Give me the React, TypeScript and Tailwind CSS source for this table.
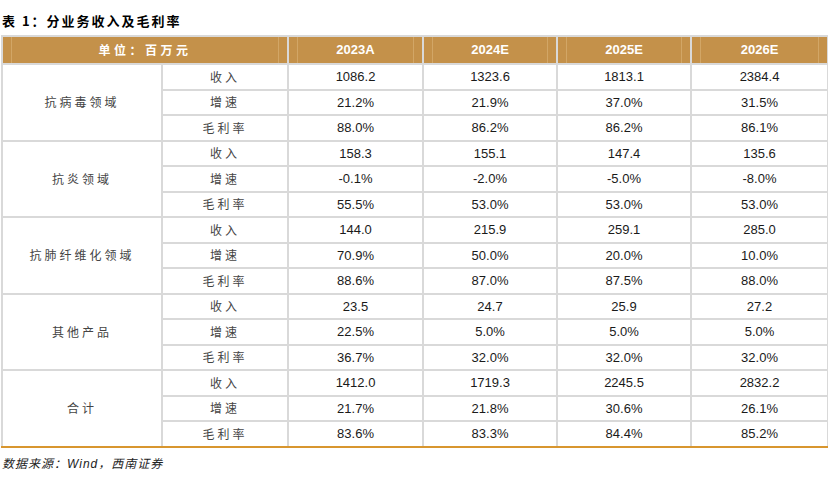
const years = ['2023A', '2024E', '2025E', '2026E'];

const groups = [
  {
    name: '抗病毒领域',
    rows: [
      ['1086.2', '1323.6', '1813.1', '2384.4'],
      ['21.2%', '21.9%', '37.0%', '31.5%'],
      ['88.0%', '86.2%', '86.2%', '86.1%'],
    ],
  },
  {
    name: '抗炎领域',
    rows: [
      ['158.3', '155.1', '147.4', '135.6'],
      ['-0.1%', '-2.0%', '-5.0%', '-8.0%'],
      ['55.5%', '53.0%', '53.0%', '53.0%'],
    ],
  },
  {
    name: '抗肺纤维化领域',
    rows: [
      ['144.0', '215.9', '259.1', '285.0'],
      ['70.9%', '50.0%', '20.0%', '10.0%'],
      ['88.6%', '87.0%', '87.5%', '88.0%'],
    ],
  },
  {
    name: '其他产品',
    rows: [
      ['23.5', '24.7', '25.9', '27.2'],
      ['22.5%', '5.0%', '5.0%', '5.0%'],
      ['36.7%', '32.0%', '32.0%', '32.0%'],
    ],
  },
  {
    name: '合计',
    rows: [
      ['1412.0', '1719.3', '2245.5', '2832.2'],
      ['21.7%', '21.8%', '30.6%', '26.1%'],
      ['83.6%', '83.3%', '84.4%', '85.2%'],
    ],
  },
];

const metrics = ['收入', '增速', '毛利率'];

const cjk = "font-['Noto_Sans_CJK_SC',sans-serif]";
const num = "font-['Liberation_Sans','Noto_Sans_CJK_SC',sans-serif]";

export default function App() {
  return (
    <div className="w-[828px] h-[481px] bg-white text-[#222]">
      <div className={`pt-[12px] pl-[2px] h-[35px] text-[13px] leading-[18px] font-bold tracking-[2px] text-black ${cjk}`}>
        表 1：分业务收入及毛利率
      </div>
      <table className="ml-[1px] w-[826px] table-fixed border-collapse">
        <colgroup>
          <col className="w-[160px]" />
          <col className="w-[126px]" />
          <col className="w-[135px]" />
          <col className="w-[134px]" />
          <col className="w-[134px]" />
          <col className="w-[137px]" />
        </colgroup>
        <thead>
          <tr className="h-[28px]">
            <th colSpan={2} className="border-2 border-[#d9d9d9] bg-[#c4914a] p-0">
              <div className={`mx-[8px] h-[26px] flex items-center justify-center border-x border-[#d2a666] text-[12px] font-bold tracking-[3.5px] text-white ${cjk}`}>
                单位：百万元
              </div>
            </th>
            {years.map((y) => (
              <th key={y} className="border-2 border-[#d9d9d9] bg-[#c4914a] p-0">
                <div className={`mx-[8px] h-[26px] flex items-center justify-center border-x border-[#d2a666] text-[13px] font-bold text-white ${num}`}>
                  {y}
                </div>
              </th>
            ))}
          </tr>
        </thead>
        <tbody>
          {groups.map((g, gi) =>
            g.rows.map((vals, ri) => {
              const last = gi === groups.length - 1 && ri === 2;
              return (
                <tr key={`${gi}-${ri}`} className={`h-[25.5px] ${last ? 'border-b-2 border-b-[#d8962f]' : ''}`}>
                  {ri === 0 && (
                    <td
                      rowSpan={3}
                      className={`border-2 border-[#d9d9d9] text-center text-[12px] tracking-[3px] text-[#444] ${cjk} ${gi === groups.length - 1 ? 'border-b-[#d8962f]' : ''}`}
                    >
                      {g.name}
                    </td>
                  )}
                  <td
                    className={`border-2 border-[#d9d9d9] p-0 text-center text-[12px] leading-none tracking-[3px] text-[#444] ${cjk} ${last ? 'border-b-[#d8962f]' : ''}`}
                  >
                    {metrics[ri]}
                  </td>
                  {vals.map((v, vi) => (
                    <td
                      key={vi}
                      className={`border-2 border-[#d9d9d9] p-0 text-center text-[13px] leading-none text-[#1a1a1a] ${num} ${last ? 'border-b-[#d8962f]' : ''}`}
                    >
                      {v}
                    </td>
                  ))}
                </tr>
              );
            })
          )}
        </tbody>
      </table>
      <div className={`pt-[8px] pl-[2px] text-[12px] leading-[14px] italic tracking-[1px] text-[#222] ${cjk}`}>
        数据来源：<span className={num}>Wind</span>，西南证券
      </div>
    </div>
  );
}
